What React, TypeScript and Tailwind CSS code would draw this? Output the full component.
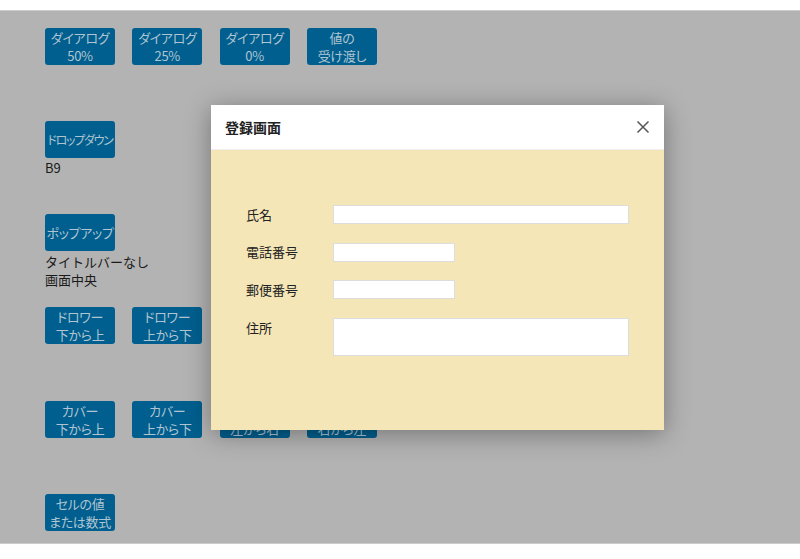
import React from "react";

const font = { fontFamily: '"Noto Sans CJK JP", "Noto Sans", sans-serif' };

function Btn({ lines, tight }: { lines: string[]; tight?: boolean }) {
  return (
    <div
      className={
        tight
          ? "w-[70px] h-[37px] rounded-[3px] bg-[#005f8e] flex flex-col items-center justify-center text-[12px] leading-[18px] text-[#b0c4d2] whitespace-nowrap [font-feature-settings:'palt'] tracking-[-1.3px]"
          : "w-[70px] h-[37px] rounded-[3px] bg-[#005f8e] flex flex-col items-center justify-center text-[13px] leading-[18px] text-[#b0c4d2] whitespace-nowrap [font-feature-settings:'palt'] tracking-[-0.3px]"
      }
    >
      {lines.map((l, i) => (
        <span key={i} className="block h-[18px]">{l}</span>
      ))}
    </div>
  );
}

function Row({ items }: { items: string[][] }) {
  return (
    <div className="flex gap-[17.3px]">
      {items.map((it, i) => (
        <Btn key={i} lines={it} />
      ))}
    </div>
  );
}

export default function App() {
  return (
    <div className="w-[800px] h-[559px] bg-white pt-[10px] relative overflow-hidden" style={font}>
      <div className="h-[534px] bg-[#b3b3b3] border-t border-b border-[#cccccc] pl-[45px] pt-[17px] text-[13px] text-[#1a1a1a]">
        <Row items={[["ダイアログ", "50%"], ["ダイアログ", "25%"], ["ダイアログ", "0%"], ["値の", "受け渡し"]]} />
        <div className="mt-[56px]">
          <Btn lines={["ドロップダウン"]} tight />
          <div className="leading-[18px] mt-[1px]">B9</div>
        </div>
        <div className="mt-[37px]">
          <Btn lines={["ポップアップ"]} />
          <div className="leading-[18px] mt-[2px]">タイトルバーなし</div>
          <div className="leading-[18px]">画面中央</div>
        </div>
        <div className="mt-[18px]">
          <Row items={[["ドロワー", "下から上"], ["ドロワー", "上から下"], ["ドロワー", "左から右"], ["ドロワー", "右から左"]]} />
        </div>
        <div className="mt-[57px]">
          <Row items={[["カバー", "下から上"], ["カバー", "上から下"], ["カバー", "左から右"], ["カバー", "右から左"]]} />
        </div>
        <div className="mt-[56px]">
          <Btn lines={["セルの値", "または数式"]} />
        </div>
      </div>

      <div className="absolute left-[211px] top-[105px] w-[453px] h-[325px] shadow-[0_4px_24px_rgba(0,0,0,0.35)] flex flex-col">
        <div className="h-[45px] bg-white flex items-center justify-between pl-[14px] pr-[14px] border-b border-[#eeeeee]">
          <span className="text-[14px] font-bold text-[#222]">登録画面</span>
          <svg width="14" height="14" viewBox="0 0 14 14">
            <path d="M1.5 1.5 L12.5 12.5 M12.5 1.5 L1.5 12.5" stroke="#555" strokeWidth="1.5" fill="none" />
          </svg>
        </div>
        <div className="flex-1 bg-[#f5e6b8] pl-[35px] pt-[55px] text-[13px] text-[#222]">
          <div className="flex flex-col gap-[18.5px]">
            <div className="flex items-center h-[19px]">
              <span className="w-[87px]">氏名</span>
              <div className="w-[296px] h-[19px] bg-white border border-[#dddddd]" />
            </div>
            <div className="flex items-center h-[19px]">
              <span className="w-[87px]">電話番号</span>
              <div className="w-[122px] h-[19px] bg-white border border-[#dddddd]" />
            </div>
            <div className="flex items-center h-[19px]">
              <span className="w-[87px]">郵便番号</span>
              <div className="w-[122px] h-[19px] bg-white border border-[#dddddd]" />
            </div>
            <div className="flex items-start">
              <span className="w-[87px] leading-[18px] mt-[1px]">住所</span>
              <div className="w-[296px] h-[38px] bg-white border border-[#dddddd]" />
            </div>
          </div>
        </div>
      </div>
    </div>
  );
}
